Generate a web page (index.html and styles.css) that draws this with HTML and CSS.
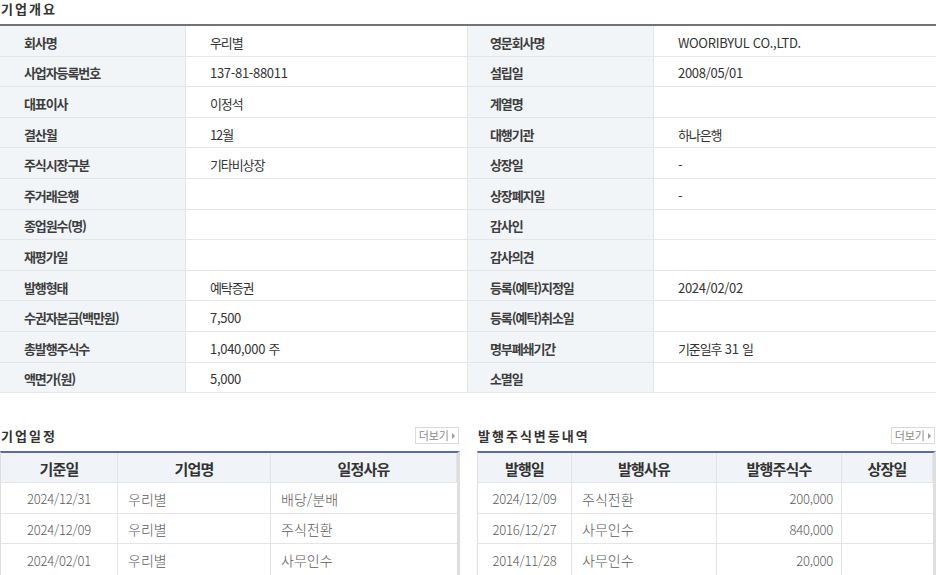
FILE: index.html
```html
<!DOCTYPE html>
<html lang="ko">
<head>
<meta charset="utf-8">
<link rel="stylesheet" href="styles.css">
</head>
<body>
<div class="page">
  <h2 class="sec-title">기업개요</h2>
  <div class="overview">
    <div class="lbl">회사명</div><div class="val ko">우리별</div><div class="lbl">영문회사명</div><div class="val">WOORIBYUL CO.,LTD.</div>
    <div class="lbl">사업자등록번호</div><div class="val">137-81-88011</div><div class="lbl">설립일</div><div class="val">2008/05/01</div>
    <div class="lbl">대표이사</div><div class="val ko">이정석</div><div class="lbl">계열명</div><div class="val"></div>
    <div class="lbl">결산월</div><div class="val ko">12월</div><div class="lbl">대행기관</div><div class="val ko">하나은행</div>
    <div class="lbl">주식시장구분</div><div class="val ko">기타비상장</div><div class="lbl">상장일</div><div class="val">-</div>
    <div class="lbl">주거래은행</div><div class="val"></div><div class="lbl">상장폐지일</div><div class="val">-</div>
    <div class="lbl">종업원수(명)</div><div class="val"></div><div class="lbl">감사인</div><div class="val"></div>
    <div class="lbl">재평가일</div><div class="val"></div><div class="lbl">감사의견</div><div class="val"></div>
    <div class="lbl">발행형태</div><div class="val ko">예탁증권</div><div class="lbl">등록(예탁)지정일</div><div class="val">2024/02/02</div>
    <div class="lbl">수권자본금(백만원)</div><div class="val">7,500</div><div class="lbl">등록(예탁)취소일</div><div class="val"></div>
    <div class="lbl">총발행주식수</div><div class="val">1,040,000 주</div><div class="lbl">명부폐쇄기간</div><div class="val"><span class="ko">기준일후</span>&nbsp;31&nbsp;일</div>
    <div class="lbl">액면가(원)</div><div class="val">5,000</div><div class="lbl">소멸일</div><div class="val"></div>
  </div>

  <div class="bottom">
    <section class="panel">
      <div class="panel-head">
        <h3 class="sub-title">기업일정</h3>
        <span class="more">더보기<span class="tri"></span></span>
      </div>
      <div class="list sched">
        <div class="th">기준일</div><div class="th">기업명</div><div class="th">일정사유</div>
        <div class="td c">2024/12/31</div><div class="td l">우리별</div><div class="td l">배당/분배</div>
        <div class="td c">2024/12/09</div><div class="td l">우리별</div><div class="td l">주식전환</div>
        <div class="td c end">2024/02/01</div><div class="td l end">우리별</div><div class="td l end">사무인수</div>
      </div>
    </section>
    <section class="panel">
      <div class="panel-head">
        <h3 class="sub-title">발행주식변동내역</h3>
        <span class="more">더보기<span class="tri"></span></span>
      </div>
      <div class="list issue">
        <div class="th">발행일</div><div class="th">발행사유</div><div class="th">발행주식수</div><div class="th">상장일</div>
        <div class="td c">2024/12/09</div><div class="td l">주식전환</div><div class="td r">200,000</div><div class="td"></div>
        <div class="td c">2016/12/27</div><div class="td l">사무인수</div><div class="td r">840,000</div><div class="td"></div>
        <div class="td c end">2014/11/28</div><div class="td l end">사무인수</div><div class="td r end">20,000</div><div class="td end"></div>
      </div>
    </section>
  </div>
</div>
</body>
</html>
```
FILE: styles.css
```css
* { box-sizing: border-box; }
html, body { margin: 0; padding: 0; background: #fff; }
body {
  font-family: "Noto Sans CJK KR", "Noto Sans", sans-serif;
  color: #333;
  width: 936px;
  overflow: hidden;
}
.page { width: 936px; }
.sec-title {
  margin: 0;
  height: 24px;
  padding: 0 0 0 1px;
  font-size: 13px;
  line-height: 18px;
  font-weight: 700;
  letter-spacing: 2px;
  color: #333;
}
.overview {
  display: grid;
  grid-template-columns: 186px 281px 187px 282px;
  grid-auto-rows: 30.6px;
  border-top: 2px solid #737373;
}
.overview > div {
  display: flex;
  align-items: center;
  padding-top: 3px;
  font-size: 13px;
  letter-spacing: -0.3px;
  border-bottom: 1px solid #e3e5e8;
}
.lbl {
  background: #f2f5f8;
  padding-left: 24px;
  font-weight: 600;
  color: #3d3d3d;
  letter-spacing: -1.1px !important;
  border-right: 1px solid #e3e5e8;
}
.lbl:nth-child(4n+3) { border-left: 1px solid #e3e5e8; padding-left: 22px; }
.val { padding-left: 24px; color: #333; }
.overview > .val.ko, .ko { letter-spacing: -1.1px; }

.bottom {
  display: flex;
  justify-content: space-between;
  margin-top: 34px;
}
.panel { width: 460px; }
.panel:last-child { width: 459px; }
.panel-head {
  display: flex;
  justify-content: space-between;
  align-items: flex-start;
  height: 24px;
}
.sub-title {
  margin: 1px 0 0 0;
  font-size: 13px;
  font-weight: 700;
  letter-spacing: 2px;
  line-height: 16px;
  padding-left: 1px;
}
.more {
  display: inline-flex;
  align-items: center;
  height: 17px;
  padding: 0 3px 0 3px;
  border: 1px solid #d9d9d9;
  font-size: 11px;
  line-height: 15px;
  color: #8a8a8a;
  background: #fff;
  margin-right: 1px;
}
.tri {
  display: inline-block;
  width: 0; height: 0;
  margin-left: 3px;
  border-top: 3px solid transparent;
  border-bottom: 3px solid transparent;
  border-left: 3px solid #9a9a9a;
}
.list {
  display: grid;
  grid-auto-rows: 30.5px;
  grid-template-rows: 30px;
  border-top: 2px solid #5b6aa5;
  border-left: 1px solid #dedede;
  border-right: 3px solid #dedede;
  border-bottom: 2px solid #dedede;
}
.sched { grid-template-columns: 117px 153px 1fr; }
.issue { grid-template-columns: 94px 145px 125px 1fr; }
.th {
  display: flex;
  align-items: center;
  justify-content: center;
  padding-top: 2px;
  background: #f0f4f8;
  font-size: 15px;
  font-weight: 700;
  letter-spacing: -0.8px;
  color: #333;
  border-bottom: 1px solid #e1e4e8;
  border-right: 1px solid #e1e4e8;
}
.td {
  display: flex;
  align-items: center;
  padding-top: 2px;
  font-size: 13px;
  letter-spacing: -0.2px;
  font-weight: 300;
  color: #5a5a5a;
  border-bottom: 1px solid #e4e4e4;
  border-right: 1px solid #e4e4e4;
}
.td.l { font-size: 14px; letter-spacing: 0; padding-left: 10px; }
.th:last-child, .sched .td:nth-child(3n), .issue .td:nth-child(4n+4) { border-right: none; }
.td.end { border-bottom: none; }
.td.c { justify-content: center; }
.td.r { justify-content: flex-end; padding-right: 8px; }
```
